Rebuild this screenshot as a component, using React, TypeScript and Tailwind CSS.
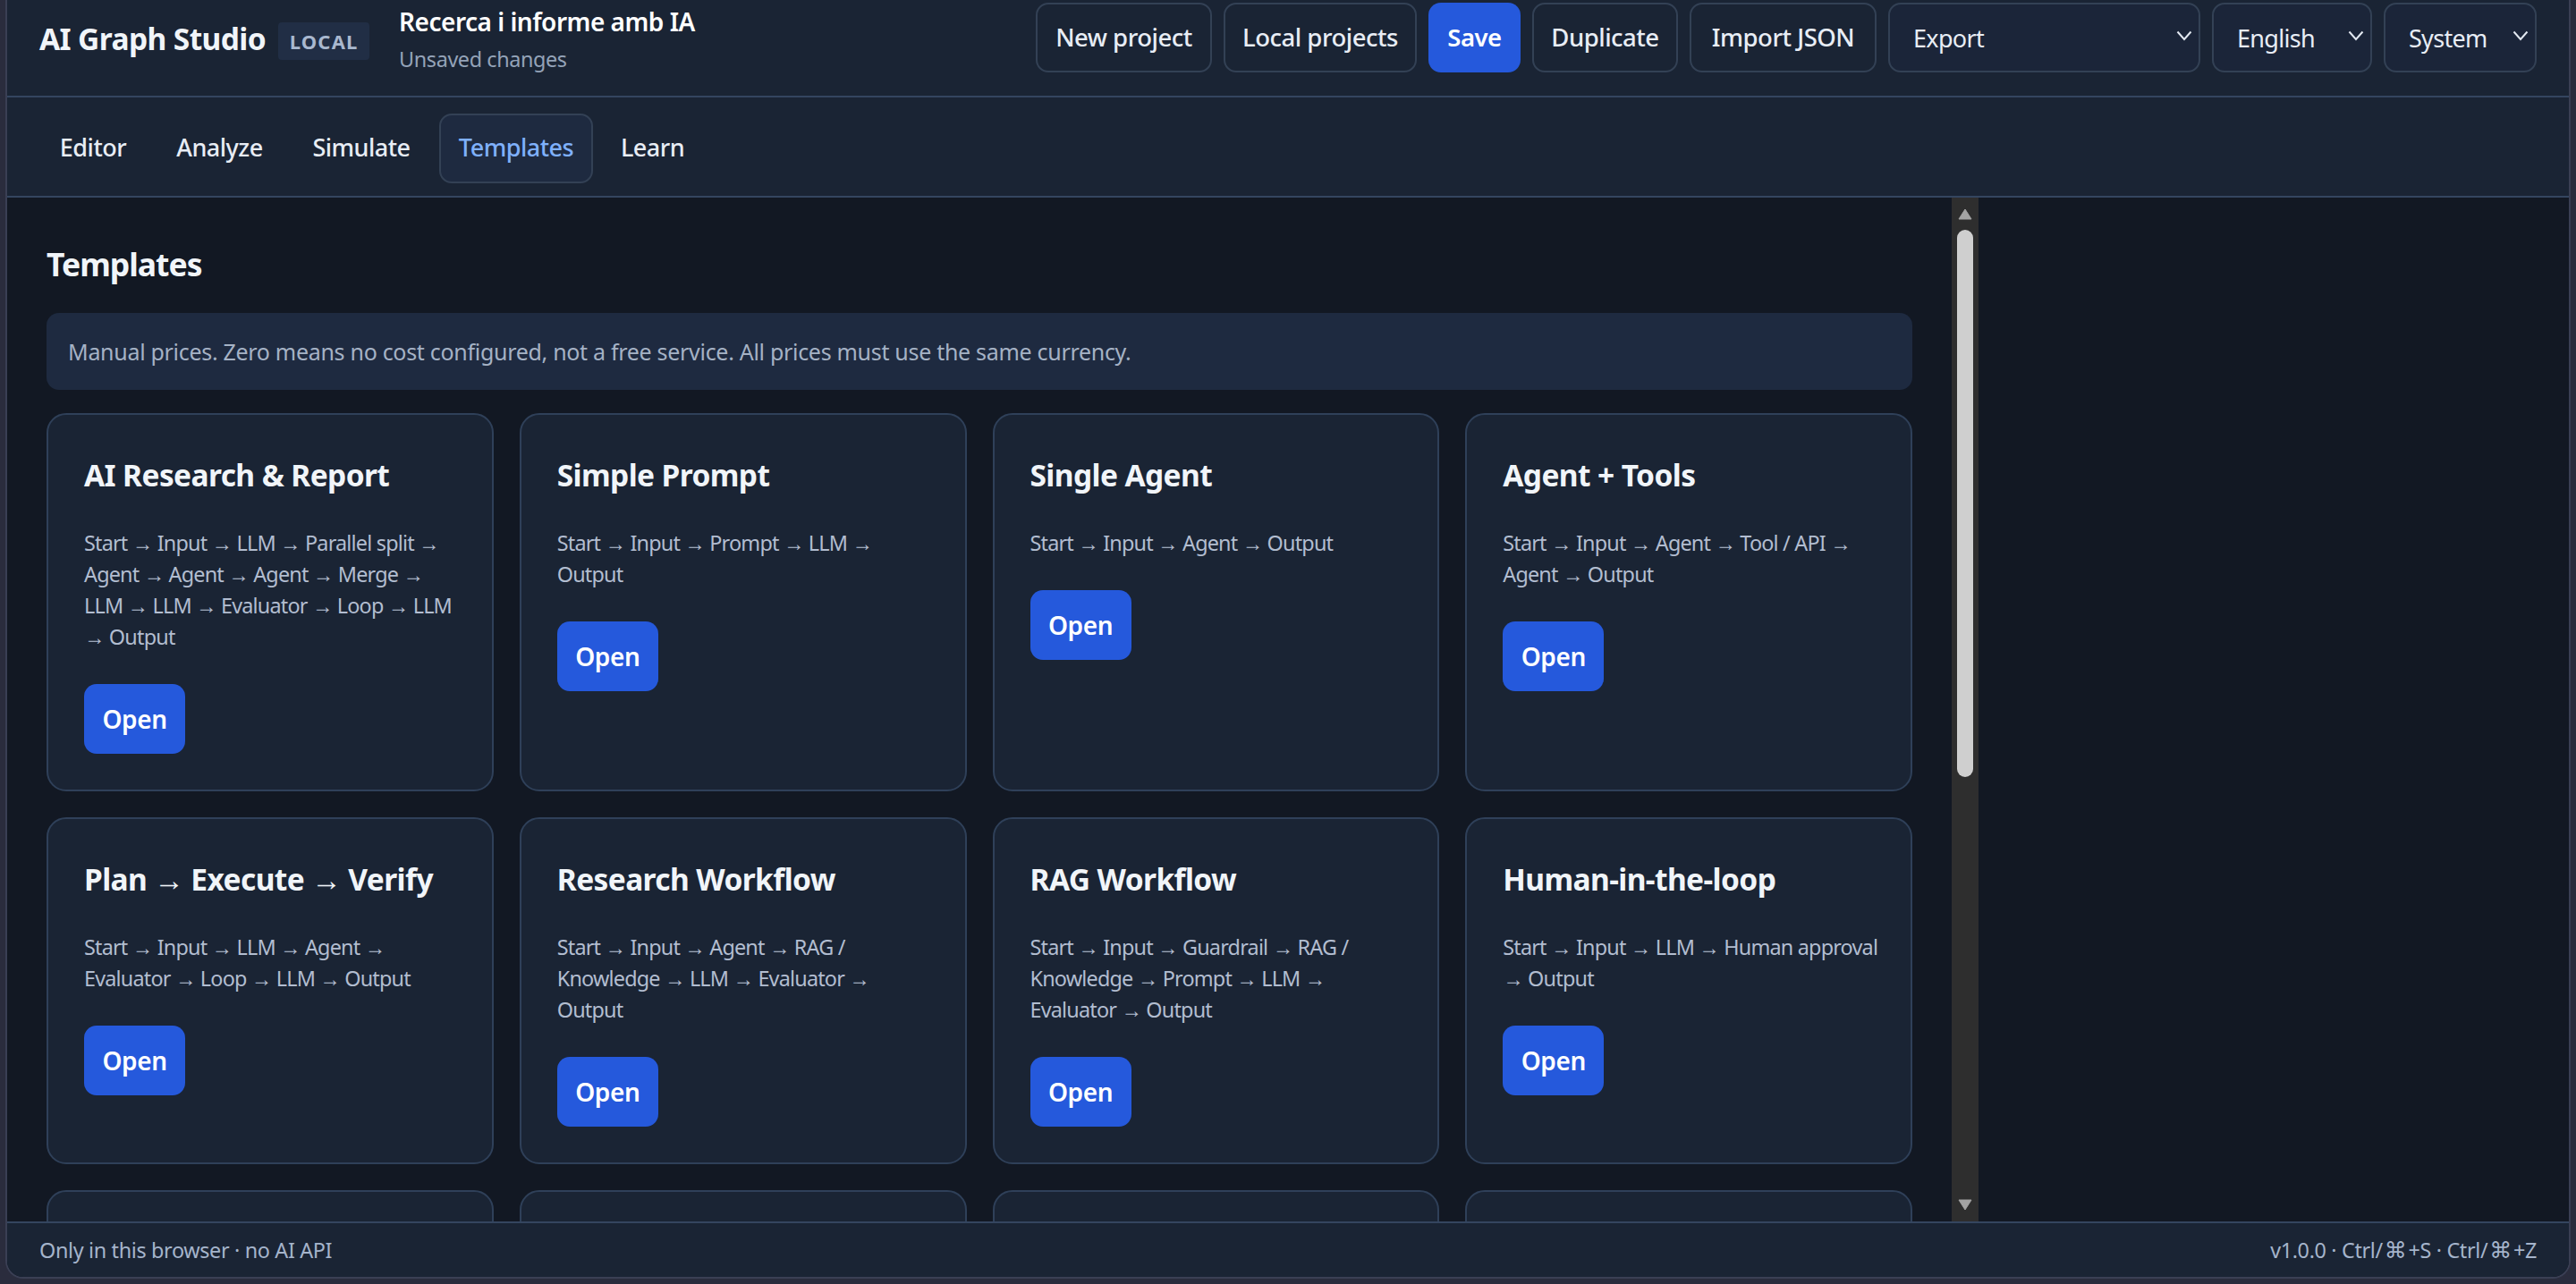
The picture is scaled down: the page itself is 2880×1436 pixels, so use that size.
const F = "font-['Noto_Sans','Open_Sans',sans-serif]";

const row1 = [
  { t: "AI Research & Report", d: "Start → Input → LLM → Parallel split → Agent → Agent → Agent → Merge → LLM → LLM → Evaluator → Loop → LLM → Output" },
  { t: "Simple Prompt", d: "Start → Input → Prompt → LLM → Output" },
  { t: "Single Agent", d: "Start → Input → Agent → Output" },
  { t: "Agent + Tools", d: "Start → Input → Agent → Tool / API → Agent → Output" },
  { t: "Plan → Execute → Verify", d: "Start → Input → LLM → Agent → Evaluator → Loop → LLM → Output" },
  { t: "Research Workflow", d: "Start → Input → Agent → RAG / Knowledge → LLM → Evaluator → Output" },
  { t: "RAG Workflow", d: "Start → Input → Guardrail → RAG / Knowledge → Prompt → LLM → Evaluator → Output" },
  { t: "Human-in-the-loop", d: "Start\u00a0→\u00a0Input\u00a0→\u00a0LLM\u00a0→\u00a0Human\u00a0approval → Output" },
];

function Btn({ label, w, primary }: { label: string; w: string; primary?: boolean }) {
  return (
    <button
      className={
        primary
          ? `${w} h-[78px] rounded-[14px] bg-[#2559dc] text-[27.5px] font-semibold tracking-[-0.5px] text-white`
          : `${w} h-[78px] rounded-[14px] border-2 border-[#334155] text-[27.5px] font-medium tracking-[-0.5px] text-[#e8edf5]`
      }
    >
      {label}
    </button>
  );
}

function Sel({ label, w }: { label: string; w: string }) {
  return (
    <div className={`${w} flex h-[78px] items-center justify-between rounded-[14px] border-2 border-[#334155] bg-[#1b2539] pl-[26px] pr-[7px] text-[27px] tracking-[-0.7px] text-[#e8edf5]`}>
      <span className="mt-[2px]">{label}</span>
      <svg width="18" height="12" viewBox="0 0 18 12" fill="none" className="mb-[4px]">
        <path d="M1.5 1.5 L9 10 L16.5 1.5" stroke="#e2e8f0" strokeWidth="2" />
      </svg>
    </div>
  );
}

function Tab({ label, w, active }: { label: string; w: string; active?: boolean }) {
  return (
    <button
      className={
        active
          ? `${w} h-[78px] rounded-[14px] border-2 border-[#334155] bg-[#1e2a40] text-[27px] font-medium tracking-[-0.5px] text-[#7fb0fb]`
          : `${w} h-[78px] rounded-[14px] text-[27px] font-medium tracking-[-0.5px] text-[#e8edf5]`
      }
    >
      {label}
    </button>
  );
}

function Card({ t, d }: { t: string; d: string }) {
  return (
    <div className="rounded-[22px] border-2 border-[#2f4059] bg-[#1a2434] px-[40px] pb-[40px] pt-[40px]">
      <h3 className="whitespace-nowrap text-[33.5px] font-bold leading-[54px] tracking-[-0.6px] text-[#f1f5f9]">{t}</h3>
      <p className="mt-[32px] text-[23.4px] leading-[35px] tracking-[-0.8px] text-[#b2bdd0]">{d}</p>
      <button className="mt-[35px] block h-[78px] w-[113px] rounded-[14px] bg-[#2559dc] text-[28px] font-semibold tracking-[-0.4px] text-white">Open</button>
    </div>
  );
}

export default function App() {
  return (
    <div className={`${F} h-[1436px] w-[2880px] overflow-hidden bg-[#2a2c3d] px-[6px] pb-[6px]`}>
      <div className="flex h-[1430px] flex-col overflow-hidden rounded-b-[20px] border-x-2 border-b-2 border-[#3a3f54] bg-[#121823]">
        <header className="flex h-[109px] shrink-0 items-start justify-between border-b-2 border-[#34455f] bg-[#1a2434] pl-[36px] pr-[36px]">
          <div className="mt-[4px] flex items-center">
            <span className="text-[33.5px] font-bold tracking-[-0.6px] text-[#f1f5f9]">AI Graph Studio</span>
            <span className="ml-[14px] mt-[6px] flex h-[42px] w-[102px] items-center justify-center rounded-[4px] bg-[#212e45] text-[22px] font-bold tracking-[1.2px] text-[#a9b8cf]">LOCAL</span>
            <div className="ml-[33px] flex flex-col">
              <span className="text-[28px] font-semibold leading-[40px] tracking-[-0.5px] text-white">Recerca i informe amb IA</span>
              <span className="mt-[6px] text-[23.4px] leading-[32px] tracking-[-0.4px] text-[#94a3b8]">Unsaved changes</span>
            </div>
          </div>
          <div className="mt-[3px] flex gap-[13px]">
            <Btn label="New project" w="w-[197px]" />
            <Btn label="Local projects" w="w-[216px]" />
            <Btn label="Save" w="w-[103px]" primary />
            <Btn label="Duplicate" w="w-[163px]" />
            <Btn label="Import JSON" w="w-[209px]" />
            <Sel label="Export" w="w-[349px]" />
            <Sel label="English" w="w-[179px]" />
            <Sel label="System" w="w-[171px]" />
          </div>
        </header>
        <nav className="flex h-[112px] shrink-0 items-center gap-[10px] border-b-2 border-[#34455f] bg-[#1a2434] pl-[36px] pt-[3px]">
          <Tab label="Editor" w="w-[120px]" />
          <Tab label="Analyze" w="w-[143px]" />
          <Tab label="Simulate" w="w-[154px]" />
          <Tab label="Templates" w="w-[172px]" active />
          <Tab label="Learn" w="w-[113px]" />
        </nav>
        <main className="flex min-h-0 flex-1">
          <div className="w-[2174px] overflow-hidden pl-[44px] pr-[44px] pt-[44px]">
            <h2 className="text-[35.5px] font-bold leading-[60px] tracking-[-1px] text-[#f1f5f9]">Templates</h2>
            <div className="mt-[25px] flex h-[86px] items-center rounded-[14px] bg-[#1e2a40] px-[24px] pt-[2px] text-[25px] tracking-[-0.3px] text-[#a5b2c5]">
              Manual prices. Zero means no cost configured, not a free service. All prices must use the same currency.
            </div>
            <div className="mt-[26px] grid grid-cols-4 gap-x-[29px] gap-y-[29px]">
              {row1.map((c) => (
                <Card key={c.t} t={c.t} d={c.d} />
              ))}
              <div className="h-[300px] rounded-[22px] border-2 border-[#2f4059] bg-[#1a2434]" />
              <div className="h-[300px] rounded-[22px] border-2 border-[#2f4059] bg-[#1a2434]" />
              <div className="h-[300px] rounded-[22px] border-2 border-[#2f4059] bg-[#1a2434]" />
              <div className="h-[300px] rounded-[22px] border-2 border-[#2f4059] bg-[#1a2434]" />
            </div>
          </div>
          <div className="flex w-[30px] shrink-0 flex-col items-center bg-[#2e2e2e] pb-[12px] pt-[12px]">
            <svg width="16" height="13" viewBox="0 0 16 13"><path d="M8 1 L15 12 H1 Z" fill="#a3a3a3" stroke="#a3a3a3" strokeLinejoin="round" /></svg>
            <div className="mt-[11px] h-[612px] w-[18px] rounded-full bg-[#cfcfcf]" />
            <div className="flex-1" />
            <svg width="16" height="13" viewBox="0 0 16 13"><path d="M1 1 H15 L8 12 Z" fill="#a3a3a3" stroke="#a3a3a3" strokeLinejoin="round" /></svg>
          </div>
          <div className="flex-1" />
        </main>
        <footer className="flex h-[62px] shrink-0 items-center justify-between border-t-2 border-[#34455f] bg-[#1a2434] pl-[36px] pr-[36px] pt-[2px] text-[23.4px] tracking-[-0.35px] text-[#a5b4cb]">
          <span>Only in this browser · no AI API</span>
          <span>
            v1.0.0 · Ctrl/<span className="mx-[2px] font-['DejaVu_Sans'] text-[25px] leading-none">⌘</span>+S · Ctrl/<span className="mx-[2px] font-['DejaVu_Sans'] text-[25px] leading-none">⌘</span>+Z
          </span>
        </footer>
      </div>
    </div>
  );
}
